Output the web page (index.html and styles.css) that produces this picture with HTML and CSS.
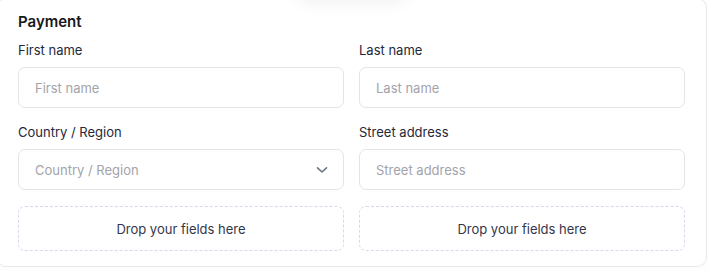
FILE: index.html
```html
<!DOCTYPE html>
<html lang="en">
<head>
  <meta charset="UTF-8" />
  <meta name="viewport" content="width=device-width, initial-scale=1.0"/>
  <title>Payment</title>
  <link rel="stylesheet" href="styles.css">
</head>
<body>

  <!-- Payment section -->
  <div class="card">
    <div class="drag-shadow"></div>
    <h2>Payment</h2>

    <div class="grid">
      <div class="field">
        <label for="firstName">First name</label>
        <input type="text" id="firstName" placeholder="First name" />
      </div>
      <div class="field">
        <label for="lastName">Last name</label>
        <input type="text" id="lastName" placeholder="Last name" />
      </div>

      <div class="field">
        <label>Country / Region</label>
        <div class="select">
          <span>Country / Region</span>
          <svg width="12" height="8" viewBox="0 0 12 8" fill="none">
            <path d="M1.5 1.8 L6 6 L10.5 1.8" stroke="#6b7588" stroke-width="1.6" stroke-linecap="round" stroke-linejoin="round"/>
          </svg>
        </div>
      </div>
      <div class="field">
        <label for="street">Street address</label>
        <input type="text" id="street" placeholder="Street address" />
      </div>

      <div class="drop">Drop your fields here</div>
      <div class="drop">Drop your fields here</div>
    </div>
  </div>

</body>
</html>
```

FILE: styles.css
```css
* {
  box-sizing: border-box;
  margin: 0;
  padding: 0;
  font-family: 'Inter', 'Liberation Sans', sans-serif;
}

body {
  background: #fdfdfd;
  overflow: hidden;
}

.card {
  position: relative;
  background: #ffffff;
  border: 1px solid #e8e8ec;
  border-radius: 10px;
  margin: -2px 1px 0 -4px;
  padding: 13px 21px 15px 21px;
}

/* faint shadow of something dragged above the card */
.drag-shadow {
  position: absolute;
  top: -40px;
  left: 295px;
  width: 120px;
  height: 40px;
  border-radius: 20px;
  box-shadow: 0 5px 16px rgba(0, 0, 0, 0.05);
}

h2 {
  font-size: 15px;
  line-height: 20px;
  font-weight: 600;
  color: #18181b;
  margin-bottom: 9px;
}

.grid {
  display: grid;
  grid-template-columns: 326px 1fr;
  column-gap: 15px;
  row-gap: 15px;
}

label {
  display: block;
  font-size: 13px;
  line-height: 18px;
  color: #25283a;
  margin-bottom: 8px;
}

input, .select {
  width: 100%;
  height: 41px;
  padding: 0 16px;
  border: 1px solid #e4e4e8;
  border-radius: 7px;
  font-size: 13px;
  color: #25283a;
  background: #ffffff;
}

input::placeholder {
  color: #a3a3aa;
}

input:focus {
  outline: none;
  border-color: #a5b4fc;
}

.select {
  display: flex;
  align-items: center;
  justify-content: space-between;
  color: #a3a3aa;
  padding-right: 15px;
}

.drop {
  height: 45px;
  margin-top: 1px;
  border: 1px dashed #d8d8ec;
  border-radius: 7px;
  display: flex;
  align-items: center;
  justify-content: center;
  font-size: 13px;
  color: #34364a;
}
```
